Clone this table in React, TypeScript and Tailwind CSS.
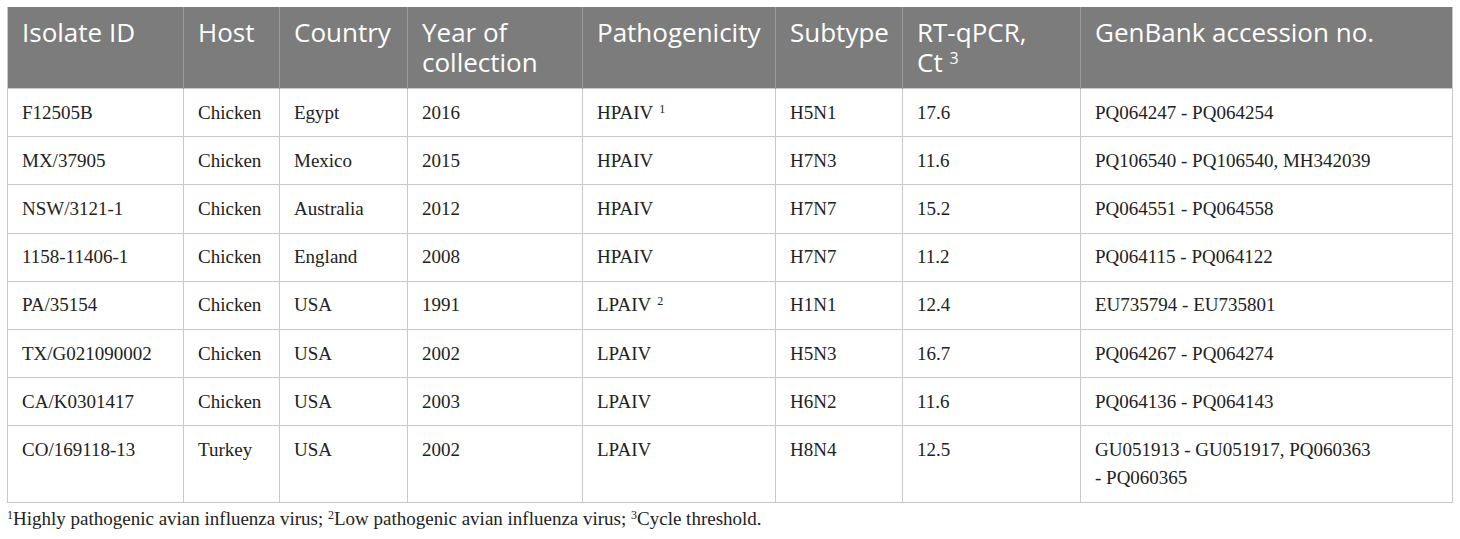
type Row = {
    id: string;
    host: string;
    country: string;
    year: string;
    path: string;
    sup?: string;
    subtype: string;
    ct: string;
    genbank: string[];
};

const rows: Row[] = [
    { id: "F12505B", host: "Chicken", country: "Egypt", year: "2016", path: "HPAIV", sup: "1", subtype: "H5N1", ct: "17.6", genbank: ["PQ064247 - PQ064254"] },
    { id: "MX/37905", host: "Chicken", country: "Mexico", year: "2015", path: "HPAIV", subtype: "H7N3", ct: "11.6", genbank: ["PQ106540 - PQ106540, MH342039"] },
    { id: "NSW/3121-1", host: "Chicken", country: "Australia", year: "2012", path: "HPAIV", subtype: "H7N7", ct: "15.2", genbank: ["PQ064551 - PQ064558"] },
    { id: "1158-11406-1", host: "Chicken", country: "England", year: "2008", path: "HPAIV", subtype: "H7N7", ct: "11.2", genbank: ["PQ064115 - PQ064122"] },
    { id: "PA/35154", host: "Chicken", country: "USA", year: "1991", path: "LPAIV", sup: "2", subtype: "H1N1", ct: "12.4", genbank: ["EU735794 - EU735801"] },
    { id: "TX/G021090002", host: "Chicken", country: "USA", year: "2002", path: "LPAIV", subtype: "H5N3", ct: "16.7", genbank: ["PQ064267 - PQ064274"] },
    { id: "CA/K0301417", host: "Chicken", country: "USA", year: "2003", path: "LPAIV", subtype: "H6N2", ct: "11.6", genbank: ["PQ064136 - PQ064143"] },
    { id: "CO/169118-13", host: "Turkey", country: "USA", year: "2002", path: "LPAIV", subtype: "H8N4", ct: "12.5", genbank: ["GU051913 - GU051917, PQ060363", "- PQ060365"] },
];

const th = "border-x border-[#9a9a9a] first:border-l-[#c8c8c8] last:border-r-[#c8c8c8] pl-[14px] pr-2 pt-[10px] pb-[11px] text-left align-top font-normal";
const td = "border border-[#c8c8c8] pl-[14px] pr-2 py-[9.6px] align-top";

export default function App() {
    return (
        <div className="w-[1460px] h-[539px] bg-white px-[7px] pt-[7px]">
            <table className="w-[1445px] table-fixed border-collapse">
                <colgroup>
                    <col className="w-[176px]" />
                    <col className="w-[96px]" />
                    <col className="w-[128px]" />
                    <col className="w-[175px]" />
                    <col className="w-[193px]" />
                    <col className="w-[127px]" />
                    <col className="w-[178px]" />
                    <col className="w-[372px]" />
                </colgroup>
                <thead>
                    <tr className="bg-[#7b7c7b] text-white text-[26px] leading-[30px] font-['Open_Sans',sans-serif]">
                        <th className={th}>Isolate ID</th>
                        <th className={th}>Host</th>
                        <th className={th}>Country</th>
                        <th className={th}>Year of<br />collection</th>
                        <th className={th}>Pathogenicity</th>
                        <th className={th}>Subtype</th>
                        <th className={th}>RT-qPCR,<br />Ct <sup className="text-[16px]">3</sup></th>
                        <th className={th}>GenBank accession no.</th>
                    </tr>
                </thead>
                <tbody className="text-[#222] text-[19px] leading-[28px] font-['Liberation_Serif',serif]">
                    {rows.map((r) => (
                        <tr key={r.id}>
                            <td className={td}>{r.id}</td>
                            <td className={td}>{r.host}</td>
                            <td className={td}>{r.country}</td>
                            <td className={td}>{r.year}</td>
                            <td className={td}>
                                {r.path}
                                {r.sup && <sup className="text-[12px] ml-[6px]">{r.sup}</sup>}
                            </td>
                            <td className={td}>{r.subtype}</td>
                            <td className={td}>{r.ct}</td>
                            <td className={td}>
                                {r.genbank.map((g) => (
                                    <div key={g}>{g}</div>
                                ))}
                            </td>
                        </tr>
                    ))}
                </tbody>
            </table>
            <p className="mt-[5px] text-[19px] leading-[22px] text-[#222] font-['Liberation_Serif',serif]">
                <sup className="text-[12px]">1</sup>Highly pathogenic avian influenza virus; <sup className="text-[12px]">2</sup>Low pathogenic avian influenza virus; <sup className="text-[12px]">3</sup>Cycle threshold.
            </p>
        </div>
    );
}
